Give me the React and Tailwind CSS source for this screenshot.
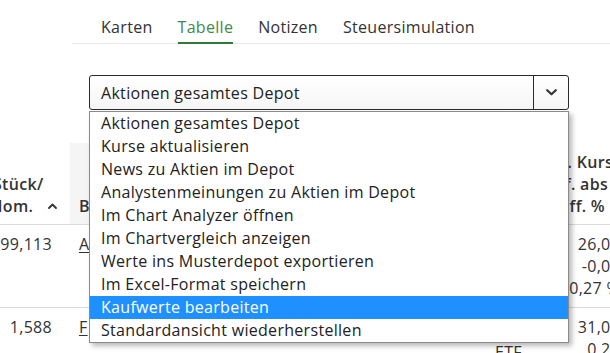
import React from 'react';

const tabs = ['Karten', 'Tabelle', 'Notizen', 'Steuersimulation'];

const options = [
  'Aktionen gesamtes Depot',
  'Kurse aktualisieren',
  'News zu Aktien im Depot',
  'Analystenmeinungen zu Aktien im Depot',
  'Im Chart Analyzer öffnen',
  'Im Chartvergleich anzeigen',
  'Werte ins Musterdepot exportieren',
  'Im Excel-Format speichern',
  'Kaufwerte bearbeiten',
  'Standardansicht wiederherstellen',
];

const rows = [
  { qty: '99,113', name: 'A', type: '', kurs: ['26,05', '-0,07', '-0,27 %'] },
  { qty: '1,588', name: 'F', type: 'ETF', kurs: ['31,05', '0,22', '0,71 %'] },
];

function Chevron() {
  return (
    <svg width="11" height="7" viewBox="0 0 11 7" fill="none">
      <path d="M1.2 1.2 L5.5 5.3 L9.8 1.2" stroke="#333" strokeWidth="2.2" strokeLinecap="round" strokeLinejoin="round" />
    </svg>
  );
}

function SortUp() {
  return (
    <svg width="9" height="6" viewBox="0 0 9 6" fill="none">
      <path d="M1 5 L4.5 1.5 L8 5" stroke="#333" strokeWidth="1.8" strokeLinecap="round" strokeLinejoin="round" />
    </svg>
  );
}

export default function App() {
  return (
    <div
      className="relative h-[353px] w-[610px] overflow-hidden bg-white text-[16px] tracking-[0.3px] text-[#333]"
      style={{ fontFamily: '"Open Sans", "Liberation Sans", sans-serif' }}
    >
      {/* Tabs */}
      <nav className="ml-[72px] flex h-[44px] items-end gap-[25px] border-b border-[#e8e8e8] pl-[29px]">
        {tabs.map((t) => (
          <div
            key={t}
            className={`-mb-px border-b-2 pb-[5px] leading-[20px] ${
              t === 'Tabelle' ? 'border-[#2f7a3b] text-[#3f8a4a]' : 'border-transparent text-[#333]'
            }`}
          >
            {t}
          </div>
        ))}
      </nav>

      {/* Select */}
      <div className="relative z-10 ml-[89px] mt-[31px] w-[480px]">
        <div className="flex h-[35px] items-stretch rounded-[3px] border border-[#2a2a2a] bg-gradient-to-b from-white to-[#f6f6f6]">
          <div className="flex flex-1 items-center pl-[11px] leading-[20px] text-[#222]">Aktionen gesamtes Depot</div>
          <div className="flex w-[35px] items-center justify-center border-l border-[#2a2a2a]">
            <Chevron />
          </div>
        </div>
        <ul className="absolute left-0 top-[36px] w-[480px] border border-[#8a8a8a] bg-white shadow-[3px_3px_5px_rgba(0,0,0,0.28)]">
          {options.map((o) => (
            <li
              key={o}
              className={`h-[23px] whitespace-nowrap pl-[11px] leading-[23px] ${
                o === 'Kaufwerte bearbeiten' ? 'bg-[#1e90ff] text-white' : 'text-[#222]'
              }`}
            >
              {o}
            </li>
          ))}
        </ul>
      </div>

      {/* Table behind */}
      <div className="mt-[33px] ml-[-15px] w-[700px]">
        <div className="flex h-[82px] border-b border-[#dcdcdc] font-semibold leading-[22px]">
          <div className="flex w-[85px] items-end pb-[7px] pl-[8px]">
            <div>
              <div>Stück/</div>
              <div className="-ml-[3px] flex items-center gap-[15px]">
                Nom. <SortUp />
              </div>
            </div>
          </div>
          <div className="flex w-[410px] items-end bg-[#f5f5f5] pb-[7px] pl-[9px]">Bezeichnung</div>
          <div className="w-[80px]" />
          <div className="flex w-[100px] items-end justify-end whitespace-nowrap pb-[7px] pr-[47px] text-right">
            <div>
              <div>Akt. Kurs</div>
              <div className="mr-[5px]">Diff. abs</div>
              <div className="mr-[8px]">Diff. %</div>
            </div>
          </div>
        </div>
        {rows.map((r) => (
          <div key={r.qty} className="flex h-[83px] border-b border-[#dcdcdc] pt-[8px] leading-[22px]">
            <div className="w-[85px] pr-[18px] text-right">{r.qty}</div>
            <div className="w-[410px] pl-[9px]">
              <span className="underline underline-offset-2">{r.name}</span>
            </div>
            <div className="w-[80px] pt-[25px] pl-[15px]">{r.type}</div>
            <div className="flex w-[100px] justify-end whitespace-nowrap pr-[40px] text-right">
              <div>
                {r.kurs.map((k) => (
                  <div key={k}>{k}</div>
                ))}
              </div>
            </div>
          </div>
        ))}
      </div>
    </div>
  );
}
